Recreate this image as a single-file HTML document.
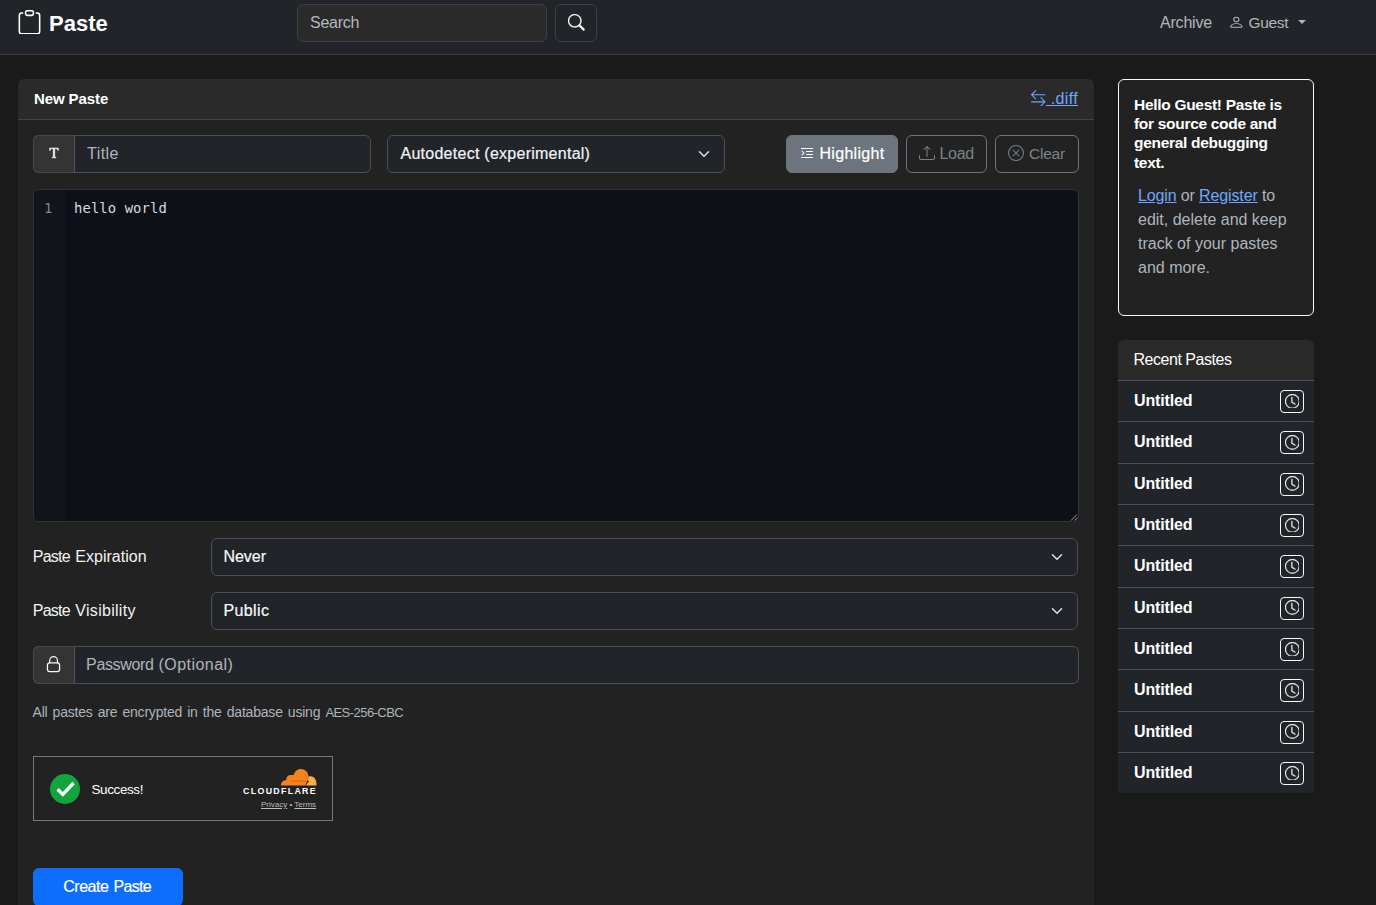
<!DOCTYPE html>
<html lang="en" class="lib">
<head>
<meta charset="utf-8">
<title>Paste</title>
<style>
*{box-sizing:border-box;margin:0;padding:0}
html,body{width:1376px;height:905px;overflow:hidden}
body{background:#1a1a1a;color:#e9ecef;font-family:"Liberation Sans",sans-serif;font-size:16px;line-height:24px;position:relative}
.abs{position:absolute}
svg{display:block}
.t{position:absolute;white-space:nowrap;line-height:24px}
a{color:#6ea8fe;text-decoration:underline}

/* ---------- navbar ---------- */
#nav{left:0;top:0;width:1376px;height:55px;background:#212529;border-bottom:1px solid #3b3f43}
#brand-ico{left:17.200px;top:9.700px;width:25px;height:24.600px;color:#fff}
#brand{left:50px;top:4px;height:36px;line-height:36px;font-size:24px;font-weight:700;color:#fff}
#search{left:297px;top:4px;width:250px;height:38px;background:#2a2a2a;border:1px solid #3d4146;border-radius:6px}
#search .t{left:12px;top:6px;color:#b4b9be}
#sbtn{left:555px;top:4px;width:42px;height:38px;border:1px solid #3d4146;border-radius:6px}
#sbtn svg{position:absolute;left:12px;top:9.200px;width:16.600px;height:16.600px;color:#fff;stroke:#fff;stroke-width:.3}
#archive{left:1160px;top:11px;color:#b3b5b7}
#guest-ico{left:1227.900px;top:15.200px;width:16.600px;height:14.500px;color:#b3b5b7}
#guest{left:1248.500px;top:11px;color:#b3b5b7}
#caret{left:1298px;top:20px;width:0;height:0;border-left:4px solid transparent;border-right:4px solid transparent;border-top:4px solid #b3b5b7}

/* ---------- main card ---------- */
#card{left:18px;top:79px;width:1076px;height:840px;background:#222;border-radius:6px 6px 0 0}
#card-h{left:0;top:0;width:1076px;height:41px;background:#2a2a2a;border-bottom:1px solid #424242;border-radius:6px 6px 0 0}
#newpaste{left:16px;top:8px;font-weight:700;color:#fff}
#diff{left:1028px;top:7.500px;color:#6ea8fe;white-space:pre}

.ig{border:1px solid #495057;background:#212529;border-radius:6px;height:38px}
.addon{position:absolute;left:-1px;top:-1px;width:42px;height:38px;background:#343434;border:1px solid #484848;border-right-color:#4d5560;border-radius:6px 0 0 6px}
.chev{position:absolute;right:14.200px;top:12px;width:12px;height:12px}
.ph{color:#b0b5ba}
.btn{height:38px;border-radius:6px;border:1px solid #6c757d;color:#7a8289}

/* ---------- editor ---------- */
#ed{left:15px;top:110px;width:1046px;height:333px;background:#0d1117;border:1px solid #2d333b;border-radius:6px;overflow:hidden}
#gut{left:0;top:0;width:31px;height:333px;background:#11151b}
.mono{font-family:"DejaVu Sans Mono","Liberation Mono",monospace;font-size:13.9px}

/* ---------- sidebar ---------- */
#hello{left:1118px;top:79px;width:196px;height:237px;background:#222;border:1px solid #f8f9fa;border-radius:6px}
#recent{left:1118px;top:340px;width:196px;height:453px;background:#212529;border-radius:6px 6px 0 0;overflow:hidden}
#recent-h{left:0;top:0;width:196px;height:41px;background:#2a2a2a;border-bottom:1px solid #4a5056}
.li{position:absolute;left:0;width:196px;height:41.333px;border-bottom:1px solid #4a5056}
.li .t{left:16px;top:8px;font-weight:700;color:#fff}
.li .cb{position:absolute;left:162px;top:9px;width:24px;height:23px;border:1px solid #f8f9fa;border-radius:4px}
.li .cb svg{position:absolute;left:3.600px;top:2.600px;width:14.700px;height:14.700px;color:#f8f9fa;stroke:#f8f9fa;stroke-width:.3}

/* ---------- Liberation Sans metric tuning ---------- */
.lib #brand{font-size:22px!important;left:49px!important;top:5.750px!important}
.lib #search .t{letter-spacing:-.25px!important}
.lib #archive{letter-spacing:-.2px!important}
.lib #guest{font-size:15.500px!important;letter-spacing:-.35px!important}
.lib #diff{letter-spacing:.35px!important}
.lib #newpaste{font-size:15px!important;letter-spacing:-.1px!important}
.lib #t-title{letter-spacing:.45px!important}
.lib #t-auto{letter-spacing:.26px!important;left:12.5px!important}
.lib #t-hl{letter-spacing:.3px!important;left:32.5px!important}
.lib #t-load{letter-spacing:-.3px!important;left:32.5px!important}
.lib #t-clear{font-size:15.500px!important;letter-spacing:-.25px!important}
.lib #t-exp{left:14.800px!important}
.lib #t-exp .w1,.lib #t-vis .w1{letter-spacing:-.78px!important}
.lib #t-exp .w2{letter-spacing:.02px!important;margin-left:1px!important}
.lib #t-vis .w2{letter-spacing:.28px!important;margin-left:1.100px!important}
.lib #t-never{left:11.400px!important}
.lib #t-vis{left:14.800px!important}
.lib #t-public{left:11.400px!important;letter-spacing:.4px!important}
.lib #t-pw{left:52.100px!important}
.lib #t-pw .w1{letter-spacing:-.35px!important}
.lib #t-pw .w2{letter-spacing:.45px!important;margin-left:.6px!important}
.lib #t-note{letter-spacing:-.2px!important;word-spacing:1.400px!important;left:14.500px!important;top:623px!important}
.lib #t-aes{font-size:13px!important;letter-spacing:-.55px!important}
.lib #t-succ{font-size:13.500px!important;letter-spacing:-.4px!important;left:57.500px!important}
.lib #t-create{left:30.200px!important}
.lib #t-create .w1{letter-spacing:-.45px!important}
.lib #t-create .w2{letter-spacing:-.7px!important;margin-left:.5px!important}
.lib #t-recent{letter-spacing:-.47px!important;left:15.500px!important;top:7.500px!important}
.lib .li .t{letter-spacing:-.13px!important}
.lib #t-h1,.lib #t-h2,.lib #t-h3,.lib #t-h4{font-size:15.5px!important;letter-spacing:-.3px!important}
.lib #t-p1{letter-spacing:-.13px!important}
.lib .med{-webkit-text-stroke:.2px currentColor!important}
</style>
</head>
<body>

<!-- NAVBAR -->
<div id="nav" class="abs">
  <svg id="brand-ico" class="abs" viewBox="0 0 16 16" preserveAspectRatio="none" fill="currentColor"><path d="M4 1.5H3a2 2 0 0 0-2 2V14a2 2 0 0 0 2 2h10a2 2 0 0 0 2-2V3.5a2 2 0 0 0-2-2h-1v1h1a1 1 0 0 1 1 1V14a1 1 0 0 1-1 1H3a1 1 0 0 1-1-1V3.5a1 1 0 0 1 1-1h1z"/><path d="M9.5 1a.5.5 0 0 1 .5.5v1a.5.5 0 0 1-.5.5h-3a.5.5 0 0 1-.5-.5v-1a.5.5 0 0 1 .5-.5zm-3-1A1.5 1.5 0 0 0 5 1.5v1A1.5 1.5 0 0 0 6.5 4h3A1.5 1.5 0 0 0 11 2.5v-1A1.5 1.5 0 0 0 9.5 0z"/></svg>
  <div id="brand" class="t">Paste</div>
  <div id="search" class="abs"><div class="t">Search</div></div>
  <div id="sbtn" class="abs"><svg viewBox="0 0 16 16" fill="currentColor"><path d="M11.742 10.344a6.5 6.5 0 1 0-1.397 1.398h-.001q.044.06.098.115l3.85 3.85a1 1 0 0 0 1.415-1.414l-3.85-3.85a1 1 0 0 0-.115-.1zM12 6.500a5.500 5.500 0 1 1-11 0 5.500 5.500 0 0 1 11 0"/></svg></div>
  <div id="archive" class="t">Archive</div>
  <svg id="guest-ico" class="abs" viewBox="0 0 16 16" preserveAspectRatio="none" fill="currentColor"><path d="M8 8a3 3 0 1 0 0-6 3 3 0 0 0 0 6m2-3a2 2 0 1 1-4 0 2 2 0 0 1 4 0m4 8c0 1-1 1-1 1H3s-1 0-1-1 1-4 6-4 6 3 6 4m-1-.004c-.001-.246-.154-.986-.832-1.664C11.516 10.680 10.289 10 8 10s-3.516.680-4.168 1.332c-.678.678-.830 1.418-.832 1.664z"/></svg>
  <div id="guest" class="t">Guest</div>
  <div id="caret" class="abs"></div>
</div>

<!-- MAIN CARD -->
<div id="card" class="abs">
  <div id="card-h" class="abs">
    <div id="newpaste" class="t">New Paste</div>
    <svg class="abs" style="left:1011.500px;top:10.500px;width:16.500px;height:16.500px;color:#6ea8fe" viewBox="0 0 16 16" fill="currentColor"><path d="M1 11.500a.5.5 0 0 0 .5.5h11.793l-3.147 3.146a.5.5 0 0 0 .708.708l4-4a.5.5 0 0 0 0-.708l-4-4a.5.5 0 0 0-.708.708L13.293 11H1.500a.5.5 0 0 0-.5.500m14-7a.5.5 0 0 1-.5.500H2.707l3.147 3.146a.5.5 0 1 1-.708.708l-4-4a.5.5 0 0 1 0-.708l4-4a.5.5 0 1 1 .708.708L2.707 4H14.500a.5.5 0 0 1 .5.500"/></svg>
    <div id="diff" class="t"><a> .diff</a></div>
  </div>

  <!-- toolbar row -->
  <div class="abs ig" style="left:15px;top:56px;width:338px">
    <div class="addon"><svg style="position:absolute;left:12px;top:9px;width:16px;height:16px;color:#fff" viewBox="0 0 16 16" fill="currentColor" stroke="currentColor" stroke-width=".55" stroke-linejoin="round"><path d="M12.258 3h-8.510l-.083 2.460h.479c.260-1.544.758-1.783 2.693-1.845l.424-.013v7.827c0 .663-.144.820-1.300.923v.520h4.082v-.520c-1.162-.103-1.306-.260-1.306-.923V3.602l.431.013c1.934.062 2.434.301 2.693 1.846h.479z"/></svg></div>
    <div class="t ph" id="t-title" style="left:53px;top:6px">Title</div>
  </div>
  <div class="abs ig" style="left:369px;top:56px;width:338px">
    <div class="t med" id="t-auto" style="left:12px;top:6px;color:#f1f3f5">Autodetect (experimental)</div>
    <svg class="chev" viewBox="0 0 16 16"><path fill="none" stroke="#dee2e6" stroke-linecap="round" stroke-linejoin="round" stroke-width="2" d="m2 5 6 6 6-6"/></svg>
  </div>
  <div class="abs btn" style="left:768px;top:56px;width:112px;background:#6c757d;border-color:#6c757d;color:#fff">
    <svg style="position:absolute;left:12px;top:9px;width:16px;height:16px" viewBox="0 0 16 16" fill="currentColor"><path d="M2 3.500a.5.5 0 0 1 .5-.5h11a.5.5 0 0 1 0 1h-11a.5.5 0 0 1-.5-.5m.646 2.146a.5.5 0 0 1 .708 0l2 2a.5.5 0 0 1 0 .708l-2 2a.5.5 0 0 1-.708-.708L4.293 8 2.646 6.354a.5.5 0 0 1 0-.708M7 6.500a.5.5 0 0 1 .5-.5h6a.5.5 0 0 1 0 1h-6a.5.5 0 0 1-.5-.5m0 3a.5.5 0 0 1 .5-.5h6a.5.5 0 0 1 0 1h-6a.5.5 0 0 1-.5-.5m-5 3a.5.5 0 0 1 .5-.5h11a.5.5 0 0 1 0 1h-11a.5.5 0 0 1-.5-.5"/></svg>
    <div class="t med" id="t-hl" style="left:33px;top:6px">Highlight</div>
  </div>
  <div class="abs btn" style="left:888px;top:56px;width:81px">
    <svg style="position:absolute;left:12px;top:9px;width:16px;height:16px" viewBox="0 0 16 16" fill="currentColor"><path d="M.5 9.900a.5.5 0 0 1 .5.5v2.500a1 1 0 0 0 1 1h12a1 1 0 0 0 1-1v-2.500a.5.5 0 0 1 1 0v2.500a2 2 0 0 1-2 2H2a2 2 0 0 1-2-2v-2.500a.5.5 0 0 1 .5-.5"/><path d="M7.646 1.146a.5.5 0 0 1 .708 0l3 3a.5.5 0 0 1-.708.708L8.500 2.707V11.500a.5.5 0 0 1-1 0V2.707L5.354 4.854a.5.5 0 1 1-.708-.708z"/></svg>
    <div class="t" id="t-load" style="left:33px;top:6px">Load</div>
  </div>
  <div class="abs btn" style="left:977px;top:56px;width:84px">
    <svg style="position:absolute;left:12px;top:9px;width:16px;height:16px" viewBox="0 0 16 16" fill="currentColor"><path d="M8 15A7 7 0 1 1 8 1a7 7 0 0 1 0 14m0 1A8 8 0 1 0 8 0a8 8 0 0 0 0 16"/><path d="M4.646 4.646a.5.5 0 0 1 .708 0L8 7.293l2.646-2.647a.5.5 0 0 1 .708.708L8.707 8l2.647 2.646a.5.5 0 0 1-.708.708L8 8.707l-2.646 2.647a.5.5 0 0 1-.708-.708L7.293 8 4.646 5.354a.5.5 0 0 1 0-.708"/></svg>
    <div class="t" id="t-clear" style="left:33px;top:6px">Clear</div>
  </div>

  <!-- editor -->
  <div id="ed" class="abs">
    <div id="gut" class="abs"></div>
    <div class="t mono" id="t-ln" style="left:10px;top:8px;line-height:20px;color:#7d8590">1</div>
    <div class="t mono" id="t-code" style="left:40px;top:8px;line-height:20px;color:#d5dae0;letter-spacing:.08px">hello world</div>
    <svg class="abs" style="right:0;bottom:0;width:10px;height:10px" viewBox="0 0 10 10"><path d="M3 9.500 9 3.500M6.500 9.500 9.300 6.500" stroke="#9a9c9f" stroke-width="1" fill="none"/></svg>
  </div>

  <!-- expiration / visibility -->
  <div class="t" id="t-exp" style="left:15px;top:466px;color:#f1f3f5"><span class="w1">Paste</span> <span class="w2">Expiration</span></div>
  <div class="abs ig" style="left:193px;top:459px;width:867.400px">
    <div class="t med" id="t-never" style="left:12px;top:6px;color:#f8f9fa">Never</div>
    <svg class="chev" viewBox="0 0 16 16"><path fill="none" stroke="#dee2e6" stroke-linecap="round" stroke-linejoin="round" stroke-width="2" d="m2 5 6 6 6-6"/></svg>
  </div>
  <div class="t" id="t-vis" style="left:15px;top:520px;color:#f1f3f5"><span class="w1">Paste</span> <span class="w2">Visibility</span></div>
  <div class="abs ig" style="left:193px;top:513px;width:867.400px">
    <div class="t med" id="t-public" style="left:12px;top:6px;color:#f8f9fa">Public</div>
    <svg class="chev" viewBox="0 0 16 16"><path fill="none" stroke="#dee2e6" stroke-linecap="round" stroke-linejoin="round" stroke-width="2" d="m2 5 6 6 6-6"/></svg>
  </div>

  <!-- password -->
  <div class="abs ig" style="left:15px;top:567px;width:1046px">
    <div class="addon"><svg style="position:absolute;left:12px;top:8px;width:16px;height:18px;color:#f8f9fa" viewBox="0 0 16 18" fill="none" stroke="currentColor"><rect x="1.450" y="7.900" width="12.150" height="8.600" rx="2.300" stroke-width="1.250"/><path d="M3.700 7.900V5.400a3.875 3.875 0 0 1 7.750 0V7.900" stroke-width="1.200"/></svg></div>
    <div class="t ph" id="t-pw" style="left:53px;top:6px"><span class="w1">Password</span> <span class="w2">(Optional)</span></div>
  </div>
  <div class="t" id="t-note" style="left:15px;top:622px;font-size:14px;line-height:21px;color:#adb5bd">All pastes are encrypted in the database using <span id="t-aes">AES-256-CBC</span></div>

  <!-- captcha -->
  <div id="cf" class="abs" style="left:15px;top:677px;width:300px;height:65px;border:1px solid #797979;background:#222">
    <svg class="abs" style="left:16px;top:17px;width:30px;height:30px" viewBox="0 0 30 30"><circle cx="15" cy="15" r="15" fill="#12a53b"/><path d="M7.600 15.300 12.800 20.400 23.600 9" fill="none" stroke="#fff" stroke-width="3.300"/></svg>
    <div class="t" id="t-succ" style="left:58px;top:20.700px;font-size:14px;color:#fff">Success!</div>
    <svg class="abs" style="left:245.750px;top:10.625px;width:37.500px;height:18.125px" viewBox="700 90 600 290"><path d="M718 370C712 318 752 284 800 288C794 232 836 196 880 202C898 198 908 201 916 206C932 142 980 105 1030 105C1100 105 1156 160 1155 226C1150 262 1124 320 1108 370Z" fill="#f6821f"/><path d="M1118 370C1126 345 1142 322 1166 302C1150 296 1142 290 1140 284C1152 262 1156 240 1152 228C1166 222 1180 221 1192 222C1250 226 1288 280 1285 370Z" fill="#fbad41"/><path d="M880 300H1100" stroke="#c96a17" stroke-width="18" stroke-linecap="round" opacity=".75"/></svg>
    <div class="t" id="t-cf" style="left:209.100px;top:28.150px;font-size:8.800px;font-weight:700;letter-spacing:1.330px;color:#fff;line-height:12px">CLOUDFLARE</div>
    <div class="t" id="t-pt" style="left:227px;top:41.750px;font-size:8px;line-height:12px;color:#bbb"><a style="color:#bbb">Privacy</a> &#8226; <a style="color:#bbb">Terms</a></div>
  </div>

  <!-- submit -->
  <div class="abs" style="left:15px;top:789px;width:150px;height:38px;background:#0d6efd;border-radius:6px">
    <div class="t med" id="t-create" style="left:30px;top:7px;color:#fff"><span class="w1">Create</span> <span class="w2">Paste</span></div>
  </div>
</div>

<!-- SIDEBAR -->
<div id="hello" class="abs">
  <div class="t" id="t-h1" style="left:15px;top:15px;line-height:19.200px;font-weight:700;color:#fff">Hello Guest! Paste is</div>
  <div class="t" id="t-h2" style="left:15px;top:34.200px;line-height:19.200px;font-weight:700;color:#fff">for source code and</div>
  <div class="t" id="t-h3" style="left:15px;top:53.400px;line-height:19.200px;font-weight:700;color:#fff">general debugging</div>
  <div class="t" id="t-h4" style="left:15px;top:72.600px;line-height:19.200px;font-weight:700;color:#fff">text.</div>
  <div class="t" id="t-p1" style="left:19px;top:103.800px;color:#adb5bd"><a>Login</a> or <a>Register</a> to</div>
  <div class="t" id="t-p2" style="left:19px;top:127.800px;color:#adb5bd">edit, delete and keep</div>
  <div class="t" id="t-p3" style="left:19px;top:151.800px;color:#adb5bd">track of your pastes</div>
  <div class="t" id="t-p4" style="left:19px;top:175.800px;color:#adb5bd">and more.</div>
</div>
<div id="recent" class="abs">
  <div id="recent-h" class="abs"><div class="t" id="t-recent" style="left:16px;top:8px;color:#fff">Recent Pastes</div></div>
  <div class="li" style="top:41.000px"><div class="t">Untitled</div><div class="cb"><svg viewBox="0 0 16 16" fill="currentColor"><path d="M8 3.500a.5.5 0 0 0-1 0V9a.5.5 0 0 0 .252.434l3.500 2a.5.5 0 0 0 .496-.868L8 8.710z"/><path d="M8 16A8 8 0 1 0 8 0a8 8 0 0 0 0 16m7-8A7 7 0 1 1 1 8a7 7 0 0 1 14 0"/></svg></div></div>
  <div class="li" style="top:82.333px"><div class="t">Untitled</div><div class="cb"><svg viewBox="0 0 16 16" fill="currentColor"><path d="M8 3.500a.5.5 0 0 0-1 0V9a.5.5 0 0 0 .252.434l3.500 2a.5.5 0 0 0 .496-.868L8 8.710z"/><path d="M8 16A8 8 0 1 0 8 0a8 8 0 0 0 0 16m7-8A7 7 0 1 1 1 8a7 7 0 0 1 14 0"/></svg></div></div>
  <div class="li" style="top:123.667px"><div class="t">Untitled</div><div class="cb"><svg viewBox="0 0 16 16" fill="currentColor"><path d="M8 3.500a.5.5 0 0 0-1 0V9a.5.5 0 0 0 .252.434l3.500 2a.5.5 0 0 0 .496-.868L8 8.710z"/><path d="M8 16A8 8 0 1 0 8 0a8 8 0 0 0 0 16m7-8A7 7 0 1 1 1 8a7 7 0 0 1 14 0"/></svg></div></div>
  <div class="li" style="top:165.000px"><div class="t">Untitled</div><div class="cb"><svg viewBox="0 0 16 16" fill="currentColor"><path d="M8 3.500a.5.5 0 0 0-1 0V9a.5.5 0 0 0 .252.434l3.500 2a.5.5 0 0 0 .496-.868L8 8.710z"/><path d="M8 16A8 8 0 1 0 8 0a8 8 0 0 0 0 16m7-8A7 7 0 1 1 1 8a7 7 0 0 1 14 0"/></svg></div></div>
  <div class="li" style="top:206.333px"><div class="t">Untitled</div><div class="cb"><svg viewBox="0 0 16 16" fill="currentColor"><path d="M8 3.500a.5.5 0 0 0-1 0V9a.5.5 0 0 0 .252.434l3.500 2a.5.5 0 0 0 .496-.868L8 8.710z"/><path d="M8 16A8 8 0 1 0 8 0a8 8 0 0 0 0 16m7-8A7 7 0 1 1 1 8a7 7 0 0 1 14 0"/></svg></div></div>
  <div class="li" style="top:247.667px"><div class="t">Untitled</div><div class="cb"><svg viewBox="0 0 16 16" fill="currentColor"><path d="M8 3.500a.5.5 0 0 0-1 0V9a.5.5 0 0 0 .252.434l3.500 2a.5.5 0 0 0 .496-.868L8 8.710z"/><path d="M8 16A8 8 0 1 0 8 0a8 8 0 0 0 0 16m7-8A7 7 0 1 1 1 8a7 7 0 0 1 14 0"/></svg></div></div>
  <div class="li" style="top:289.000px"><div class="t">Untitled</div><div class="cb"><svg viewBox="0 0 16 16" fill="currentColor"><path d="M8 3.500a.5.5 0 0 0-1 0V9a.5.5 0 0 0 .252.434l3.500 2a.5.5 0 0 0 .496-.868L8 8.710z"/><path d="M8 16A8 8 0 1 0 8 0a8 8 0 0 0 0 16m7-8A7 7 0 1 1 1 8a7 7 0 0 1 14 0"/></svg></div></div>
  <div class="li" style="top:330.333px"><div class="t">Untitled</div><div class="cb"><svg viewBox="0 0 16 16" fill="currentColor"><path d="M8 3.500a.5.5 0 0 0-1 0V9a.5.5 0 0 0 .252.434l3.500 2a.5.5 0 0 0 .496-.868L8 8.710z"/><path d="M8 16A8 8 0 1 0 8 0a8 8 0 0 0 0 16m7-8A7 7 0 1 1 1 8a7 7 0 0 1 14 0"/></svg></div></div>
  <div class="li" style="top:371.666px"><div class="t">Untitled</div><div class="cb"><svg viewBox="0 0 16 16" fill="currentColor"><path d="M8 3.500a.5.5 0 0 0-1 0V9a.5.5 0 0 0 .252.434l3.500 2a.5.5 0 0 0 .496-.868L8 8.710z"/><path d="M8 16A8 8 0 1 0 8 0a8 8 0 0 0 0 16m7-8A7 7 0 1 1 1 8a7 7 0 0 1 14 0"/></svg></div></div>
  <div class="li" style="top:413.000px;border-bottom:0"><div class="t">Untitled</div><div class="cb"><svg viewBox="0 0 16 16" fill="currentColor"><path d="M8 3.500a.5.5 0 0 0-1 0V9a.5.5 0 0 0 .252.434l3.500 2a.5.5 0 0 0 .496-.868L8 8.710z"/><path d="M8 16A8 8 0 1 0 8 0a8 8 0 0 0 0 16m7-8A7 7 0 1 1 1 8a7 7 0 0 1 14 0"/></svg></div></div>
</div>

</body>
</html>
